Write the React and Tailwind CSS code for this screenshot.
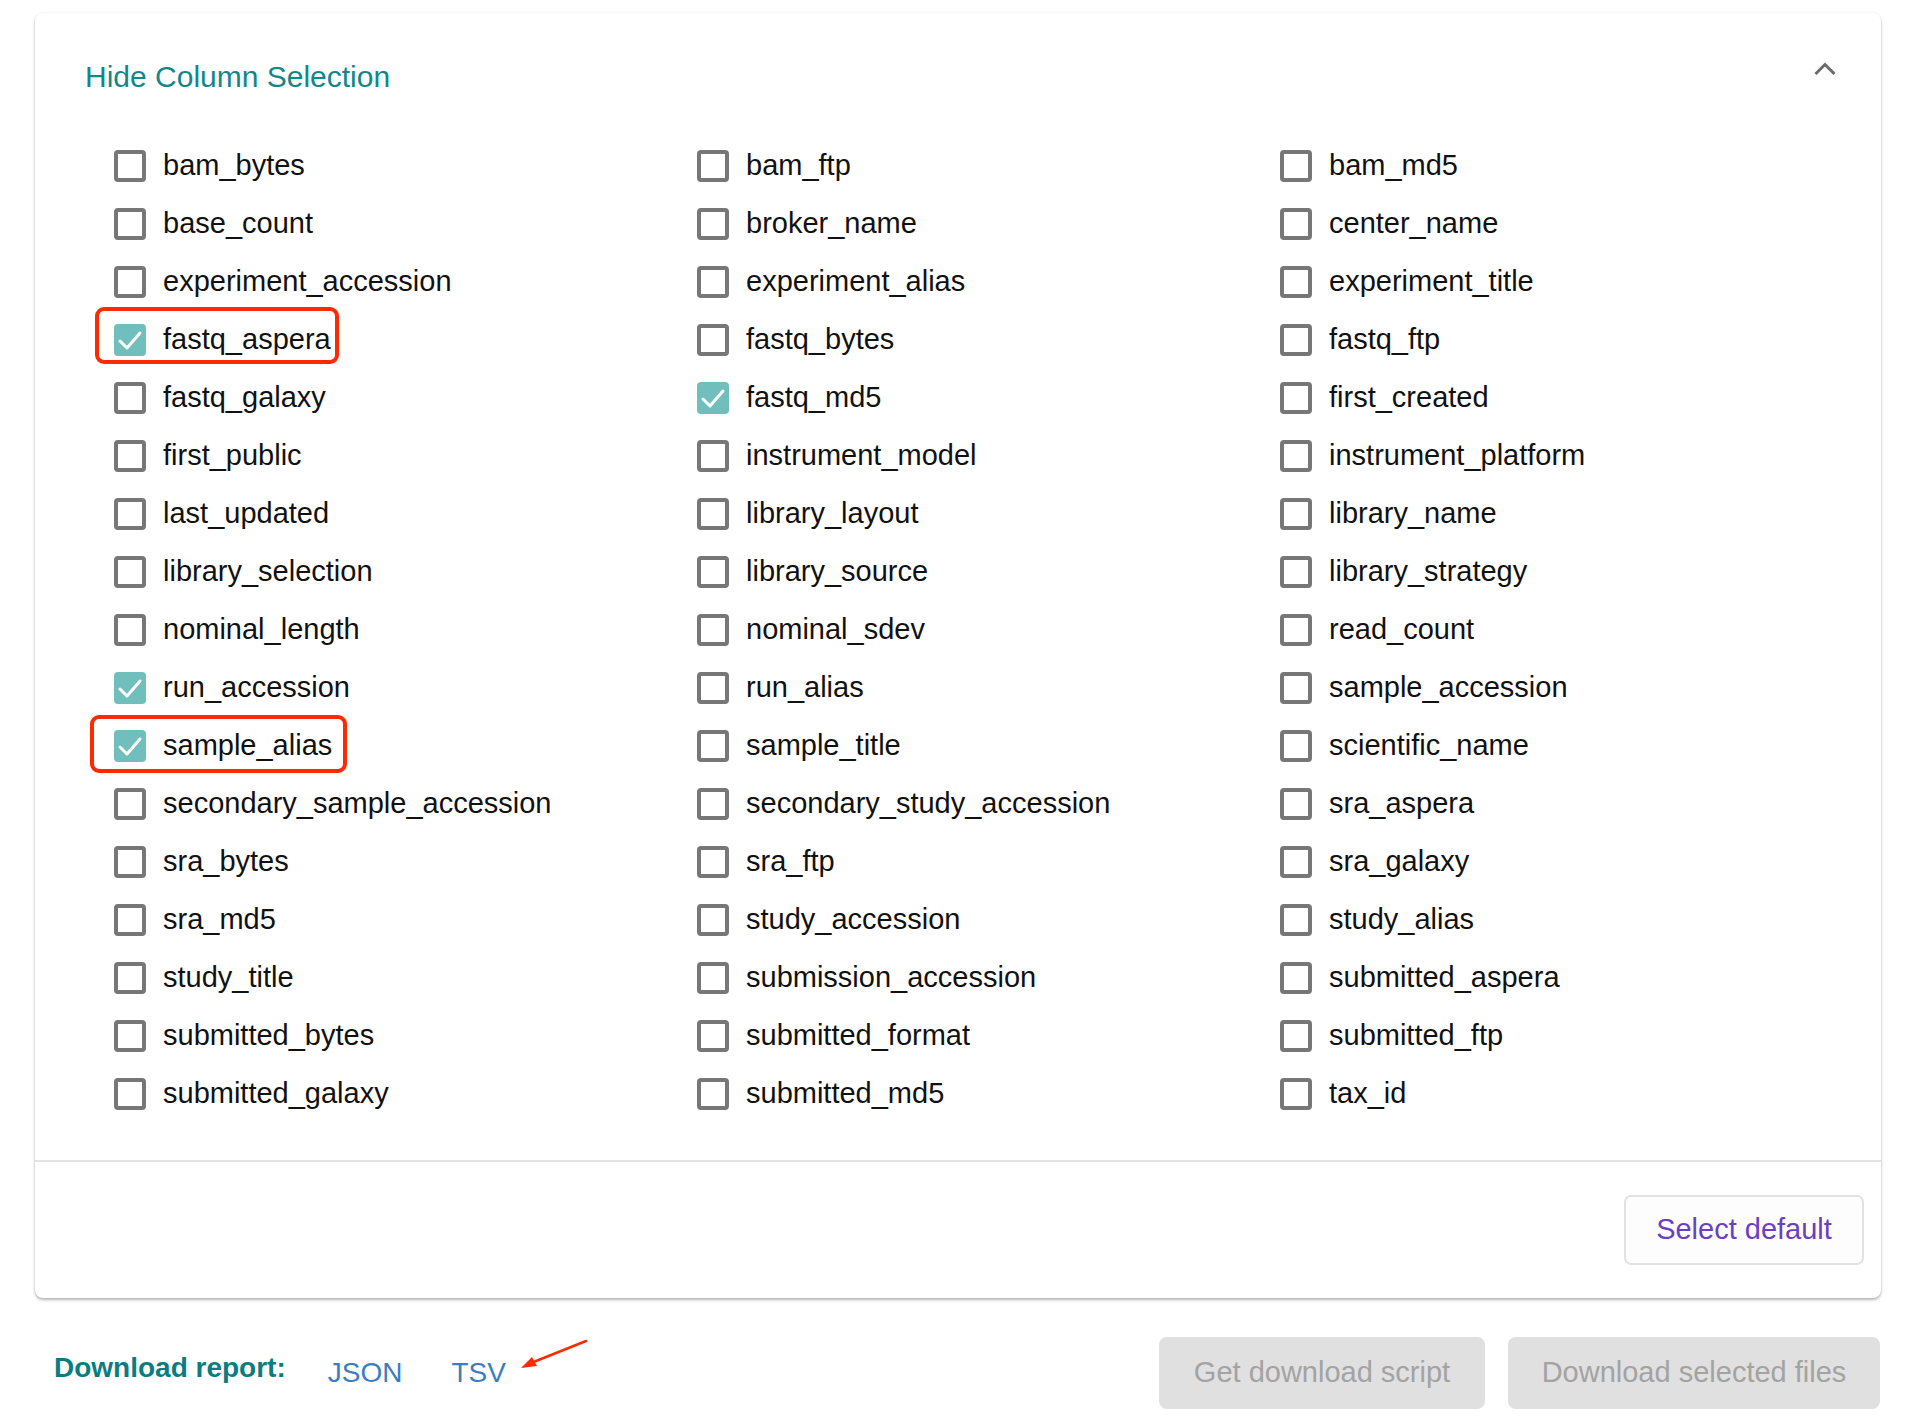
import React from "react";

const ROWS = [
  ["bam_bytes", "bam_ftp", "bam_md5"],
  ["base_count", "broker_name", "center_name"],
  ["experiment_accession", "experiment_alias", "experiment_title"],
  ["fastq_aspera", "fastq_bytes", "fastq_ftp"],
  ["fastq_galaxy", "fastq_md5", "first_created"],
  ["first_public", "instrument_model", "instrument_platform"],
  ["last_updated", "library_layout", "library_name"],
  ["library_selection", "library_source", "library_strategy"],
  ["nominal_length", "nominal_sdev", "read_count"],
  ["run_accession", "run_alias", "sample_accession"],
  ["sample_alias", "sample_title", "scientific_name"],
  ["secondary_sample_accession", "secondary_study_accession", "sra_aspera"],
  ["sra_bytes", "sra_ftp", "sra_galaxy"],
  ["sra_md5", "study_accession", "study_alias"],
  ["study_title", "submission_accession", "submitted_aspera"],
  ["submitted_bytes", "submitted_format", "submitted_ftp"],
  ["submitted_galaxy", "submitted_md5", "tax_id"],
];

const CHECKED = ["fastq_aspera", "fastq_md5", "run_accession", "sample_alias"];

function Checkbox({ checked }) {
  if (checked) {
    return (
      <span className="flex h-[32px] w-[32px] shrink-0 items-center justify-center rounded-[4px] bg-[#70bfbd]">
        <svg width="32" height="32" viewBox="0 0 32 32" fill="none">
          <polyline
            points="6,17 13,24 26,9"
            stroke="#fff"
            strokeWidth="3"
            strokeLinecap="round"
            strokeLinejoin="round"
          />
        </svg>
      </span>
    );
  }
  return <span className="h-[32px] w-[32px] shrink-0 rounded-[4px] border-[4px] border-[#777]" />;
}

function ColumnOption({ name }) {
  const checked = CHECKED.includes(name);
  return (
    <label className="relative flex h-[58px] items-center gap-[17px]">
      <Checkbox checked={checked} />
      <span className="text-[29px] text-[#111]">{name}</span>
      {/* red annotation boxes from the screenshot */}
      {name === "fastq_aspera" && (
        <span className="absolute -left-[19px] -top-[4px] h-[57px] w-[244px] rounded-[9px] border-[4px] border-[#ff2a00]" />
      )}
      {name === "sample_alias" && (
        <span className="absolute -left-[24px] -top-[2px] h-[58px] w-[257px] rounded-[9px] border-[4px] border-[#ff2a00]" />
      )}
    </label>
  );
}

export default function App() {
  return (
    <div
      className="min-h-[1426px] bg-white pl-[35px] pr-[33px] pt-[13px]"
      style={{ fontFamily: '"Liberation Sans", Arial, sans-serif' }}
    >
      <div className="rounded-[8px] bg-white shadow-[0_2px_3px_rgba(0,0,0,0.28),0_0_3px_rgba(0,0,0,0.06)]">
        <div className="flex items-start justify-between pl-[50px] pr-[45px] pt-[46px]">
          <span className="text-[30px] leading-[36px] text-[#12878a]">Hide Column Selection</span>
          <svg width="22" height="14" viewBox="0 0 22 14" className="mt-[3px]" fill="none">
            <polyline points="1.5,12 11,2.5 20.5,12" stroke="#6b6b6b" strokeWidth="3" />
          </svg>
        </div>

        <div className="grid grid-cols-[583px_583px_583px] pb-[37px] pl-[79px] pt-[42px]">
          {ROWS.flat().map((name) => (
            <ColumnOption key={name} name={name} />
          ))}
        </div>

        <div className="flex h-[138px] items-center justify-end border-t-2 border-[#e3e3e3] pr-[17px]">
          <button className="h-[70px] w-[240px] rounded-[7px] border-2 border-[#e2e2e2] bg-[#fdfdfd] text-[29px] text-[#6a3fc4]">
            Select default
          </button>
        </div>
      </div>

      <div className="relative mt-[39px] flex h-[72px] items-center pl-[19px] pr-[1px]">
        <span className="mb-[10px] text-[28px] font-bold text-[#0b7d80]">Download report:</span>
        <a className="ml-[42px] text-[28px] text-[#3b7dc0]">JSON</a>
        <a className="ml-[49px] text-[28px] text-[#3b7dc0]">TSV</a>
        <svg
          width="76"
          height="40"
          viewBox="0 0 76 40"
          className="absolute left-[480px] top-[-2px]"
          fill="none"
        >
          <line x1="71" y1="6" x2="16" y2="28" stroke="#ff2a00" strokeWidth="2.5" strokeLinecap="round" />
          <polygon points="6,33 17,22 22,31" fill="#ff2a00" />
        </svg>
        <div className="ml-auto flex gap-[23px]">
          <button className="h-[72px] w-[326px] rounded-[8px] bg-[#e0e0e0] text-[29px] text-[#a3a3a3]">
            Get download script
          </button>
          <button className="h-[72px] w-[372px] rounded-[8px] bg-[#e0e0e0] text-[29px] text-[#a3a3a3]">
            Download selected files
          </button>
        </div>
      </div>
    </div>
  );
}
